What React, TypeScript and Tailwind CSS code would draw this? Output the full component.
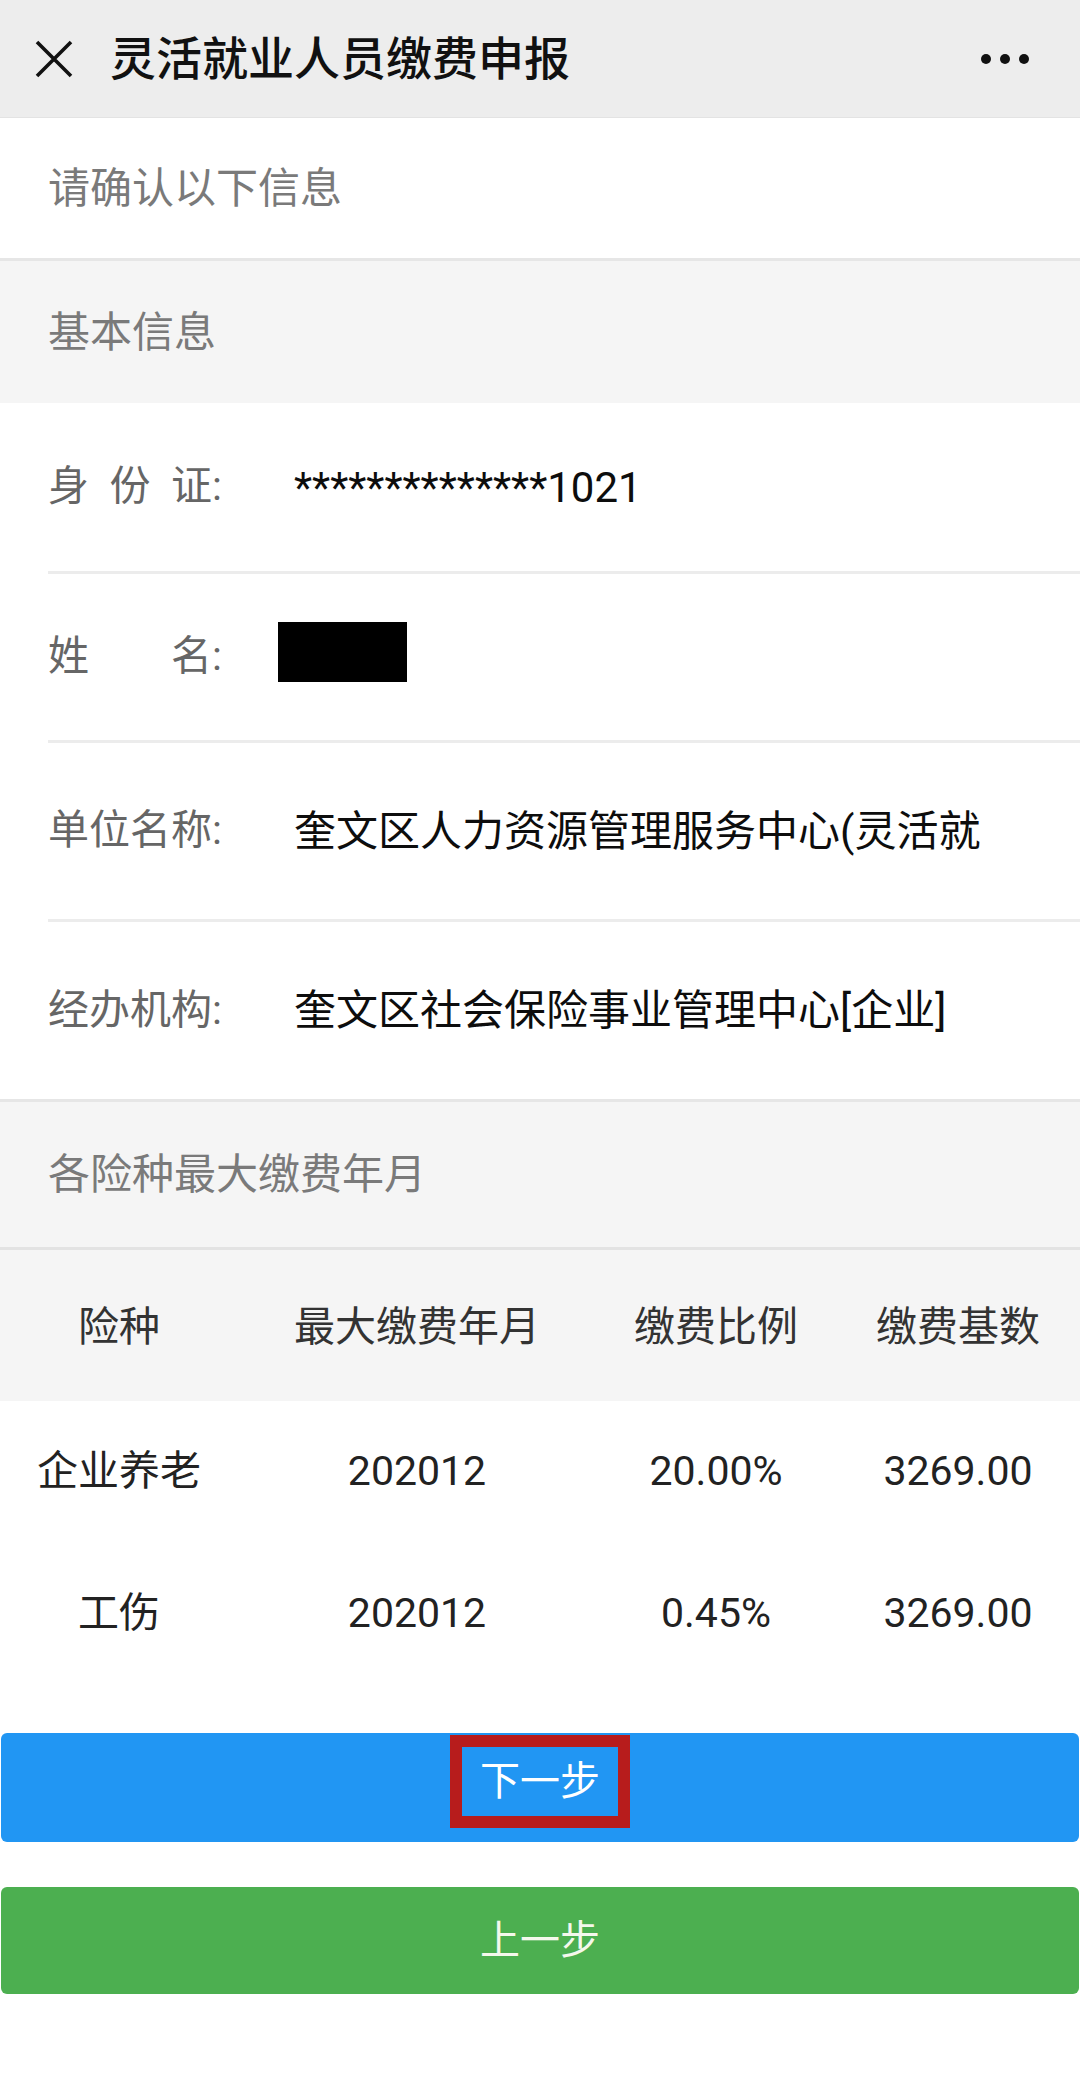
type InfoRow = {
    label: string[];
    value?: string;
    height: string;
    masked?: boolean;
    last?: boolean;
};

const rows: InfoRow[] = [
    { label: ['身', '份', '证'], value: '**************1021', height: 'h-[168px]' },
    { label: ['姓', '名'], masked: true, height: 'h-[166px]' },
    { label: ['单', '位', '名', '称'], value: '奎文区人力资源管理服务中心(灵活就', height: 'h-[176px]' },
    { label: ['经', '办', '机', '构'], value: '奎文区社会保险事业管理中心[企业]', height: 'h-[177px]', last: true },
];

const records = [
    { kind: '企业养老', month: '202012', rate: '20.00%', base: '3269.00' },
    { kind: '工伤', month: '202012', rate: '0.45%', base: '3269.00' },
];

const font = "font-['Roboto','Noto_Sans_CJK_SC',sans-serif]";

export default function App() {
    return (
        <div className={`w-[1080px] min-h-[2079px] bg-white ${font}`}>
            {/* top bar */}
            <div className="flex items-center h-[118px] pl-[35px] pr-[30px] bg-[#ededed] border-b border-[#e3e3e3]">
                <svg className="w-[38px] h-[38px]" viewBox="0 0 38 38" fill="none">
                    <path d="M2 2L36 36M36 2L2 36" stroke="#111" strokeWidth="3.6" />
                </svg>
                <h1 className="ml-[37px] text-[46px] font-medium text-[#111] leading-none">
                    灵活就业人员缴费申报
                </h1>
                <div className="flex items-center gap-[9px] ml-auto mr-[21px]">
                    <span className="w-[10px] h-[10px] rounded-full bg-[#111]" />
                    <span className="w-[10px] h-[10px] rounded-full bg-[#111]" />
                    <span className="w-[10px] h-[10px] rounded-full bg-[#111]" />
                </div>
            </div>

            <div className="flex items-center h-[143px] pl-[48px] border-b-[3px] border-[#e6e6e6] text-[42px] text-[#7a7a7a]">
                请确认以下信息
            </div>

            <div className="flex items-center h-[142px] pl-[48px] bg-[#f5f5f5] text-[42px] text-[#7a7a7a]">
                基本信息
            </div>

            {rows.map((row, i) => (
                <div
                    key={i}
                    className={`${row.last ? 'border-b-[3px] border-[#e6e6e6]' : ''}`}
                >
                    <div className={`flex items-center ${row.height} pl-[48px]`}>
                        <div className="flex items-center w-[246px] text-[41px] text-[#666]">
                            <div className="flex justify-between w-[164px]">
                                {row.label.map((c, j) => (
                                    <span key={j}>{c}</span>
                                ))}
                            </div>
                            <span>:</span>
                        </div>
                        {row.masked ? (
                            <div className="-ml-[16px] -mt-[10px] w-[129px] h-[60px] bg-black" />
                        ) : (
                            <div className="text-[42px] text-[#0d0d0d] whitespace-nowrap overflow-hidden">
                                {row.value}
                            </div>
                        )}
                    </div>
                    {!row.last && <div className="ml-[48px] h-[3px] bg-[#ececec]" />}
                </div>
            ))}

            <div className="flex items-center h-[148px] pl-[48px] bg-[#f5f5f5] border-b-[3px] border-[#e3e3e3] text-[42px] text-[#7a7a7a]">
                各险种最大缴费年月
            </div>

            {/* table */}
            <div className="flex items-center h-[151px] pt-[4px] bg-[#f5f5f5] text-[41px] text-[#333]">
                <div className="w-[238px] text-center">险种</div>
                <div className="w-[358px] text-center">最大缴费年月</div>
                <div className="w-[240px] text-center">缴费比例</div>
                <div className="flex-1 text-center">缴费基数</div>
            </div>
            {records.map((r, i) => (
                <div key={i} className="flex items-center h-[142px] text-[41px] text-[#222]">
                    <div className="w-[238px] text-center">{r.kind}</div>
                    <div className="w-[358px] text-center">{r.month}</div>
                    <div className="w-[240px] text-center">{r.rate}</div>
                    <div className="flex-1 text-center">{r.base}</div>
                </div>
            ))}

            {/* buttons */}
            <div className="flex flex-col gap-[45px] mt-[48px] px-[1px]">
                <button className="relative flex justify-center h-[109px] rounded-[6px] bg-[#2196f3] text-[40px] text-white">
                    <span className="flex items-center justify-center w-[180px] h-[93px] mt-[2px] border-[12px] border-[#b71c1c]">
                        下一步
                    </span>
                </button>
                <button className="flex items-center justify-center h-[107px] rounded-[6px] bg-[#4caf50] text-[40px] text-[#f4f8ec]">
                    上一步
                </button>
            </div>
        </div>
    );
}
